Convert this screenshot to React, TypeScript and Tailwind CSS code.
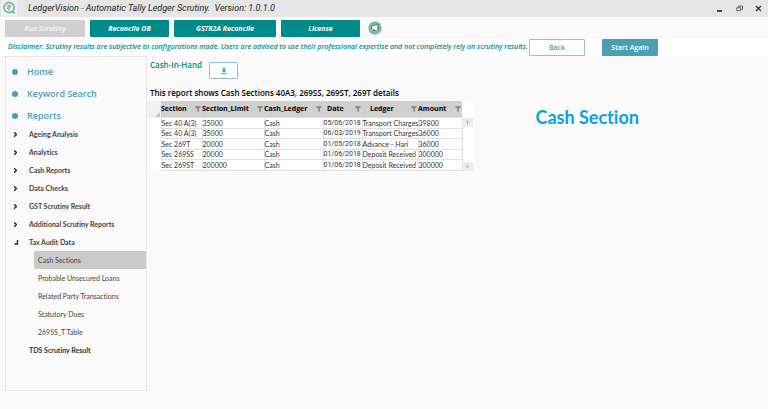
import { ChevronRight } from "lucide-react";

const reportGroups = [
  "Ageing Analysis",
  "Analytics",
  "Cash Reports",
  "Data Checks",
  "GST Scrutiny Result",
  "Additional Scrutiny Reports",
];

const taxAuditItems = [
  "Cash Sections",
  "Probable Unsecured Loans",
  "Related Party Transactions",
  "Statutory Dues",
  "269SS_T Table",
];

const columns = [
  { name: "Section", width: "w-[41px]", padding: "pl-0", cell: "" },
  { name: "Section_Limit", width: "w-[62px]", padding: "pl-0", cell: "" },
  { name: "Cash_Ledger", width: "w-[59px]", padding: "pl-0", cell: "" },
  { name: "Date", width: "w-[39px]", padding: "pl-1", cell: "font-[Roboto,sans-serif]" },
  { name: "Ledger", width: "w-[56px]", padding: "pl-2", cell: "" },
  { name: "Amount", width: "w-[44px]", padding: "pl-0", cell: "" },
];

const rows = [
  ["Sec 40 A(3)", "35000", "Cash", "05/06/2018", "Transport Charges", "39800"],
  ["Sec 40 A(3)", "35000", "Cash", "06/03/2019", "Transport Charges", "36000"],
  ["Sec 269T", "20000", "Cash", "01/05/2018", "Advance - Hari", "36000"],
  ["Sec 269SS", "20000", "Cash", "01/06/2018", "Deposit Received", "300000"],
  ["Sec 269ST", "200000", "Cash", "01/06/2018", "Deposit Received", "300000"],
];

function Logo() {
  return (
    <svg viewBox="0 0 16 17" className="h-[17px] w-4 shrink-0">
      <rect width="16" height="17" rx="2" fill="#f3f1ef" />
      <circle cx="8" cy="7.5" r="5" fill="#fff" stroke="#35b5c5" strokeWidth="1.4" />
      <path d="M11 11 13.5 13.5" stroke="#35b5c5" strokeWidth="1.6" />
      <path d="M6 5.1h4M6 6.8h4M6.2 5.1c3.4 0 3.4 3.2 0 3.2L9 10.5" fill="none" stroke="#ef9a52" strokeWidth="1.2" />
    </svg>
  );
}

function TitleBar() {
  return (
    <header className="flex h-[17px] items-center bg-[#e6e6e6] pl-px">
      <Logo />
      <h1 className="ml-[11px] flex-1 whitespace-pre font-[Roboto,sans-serif] text-[9px] leading-[17px] text-[#222] italic">
        LedgerVision - Automatic Tally Ledger Scrutiny.  Version: 1.0.1.0
      </h1>
      <div className="flex items-center gap-3 pr-[6px]">
        <button aria-label="Minimize" className="flex h-[7px] w-[7px] items-end">
          <span className="h-[2px] w-[5px] bg-[#444]" />
        </button>
        <button aria-label="Restore">
          <svg viewBox="0 0 7 7" className="h-[7px] w-[7px]" fill="none" stroke="#444">
            <path d="M2.5 2V1h4v3.5h-1M.8 2.7h4v3h-4z" strokeWidth=".8" />
          </svg>
        </button>
        <button aria-label="Close">
          <svg viewBox="0 0 7 7" className="h-[7px] w-[7px]" stroke="#333" strokeWidth="1.3">
            <path d="m1 1 5 5M6 1 1 6" />
          </svg>
        </button>
      </div>
    </header>
  );
}

function Toolbar() {
  const button = "h-[17px] rounded-[1px] bg-[#008b8b] text-[7px] leading-[17px] font-bold text-white italic";

  return (
    <nav className="flex h-[22px] items-center gap-[5px] px-[5px]">
      <button disabled className="h-[17px] w-[80px] rounded-[1px] bg-[#d0d0d0] text-[7px] leading-[17px] font-bold text-[#f3f3f3] italic">
        Run Scrutiny
      </button>
      <button className={`${button} w-[79px]`}>Reconcile OB</button>
      <button className={`${button} w-[102px]`}>GSTR2A Reconcile</button>
      <button className={`${button} w-[79px]`}>License</button>
      <button aria-label="Announcements" className="ml-[3px]">
        <svg viewBox="0 0 14 14" className="h-[14px] w-[14px]">
          <circle cx="7" cy="7" r="6.7" fill="#72bfa9" />
          <path d="M4 5 9.5 3.6v5.8L4 8.2z" fill="#f4f4f4" />
          <path d="M9.5 3.3h1v6.2h-1z" fill="#59666a" />
          <path d="M2.7 4.8h1.5v3.4H2.7z" fill="#d85a62" />
          <path d="M4 4.4 9.5 3v.8L4 5.2zM5 8.4h2l.3 1.7H5.5z" fill="#59666a" />
        </svg>
      </button>
    </nav>
  );
}

function Sidebar() {
  const group = "flex h-[18px] items-center gap-[10px] pl-[6px] font-[Lato,sans-serif] text-[7px] font-bold text-[#444]";
  const item = "block h-[18px] pl-1 leading-[18px]";

  return (
    <aside className="flex h-[335px] w-[142px] shrink-0 flex-col border border-[#e6e6e6] pt-[6px]">
      <div className="flex flex-col gap-1">
        {["Home", "Keyword Search", "Reports"].map((name) => (
          <a key={name} href="#" className="flex h-[18px] items-center gap-[9px] pl-[6px] text-[9px] font-semibold text-[#4a9fb5]">
            <span className="h-[6px] w-[6px] rounded-full bg-[#4a9fb5]" />
            {name}
          </a>
        ))}
      </div>
      {reportGroups.map((name) => (
        <button key={name} className={group}>
          <ChevronRight size={7} strokeWidth={5} color="#222" />
          {name}
        </button>
      ))}
      <button aria-expanded="true" className={group}>
        <svg viewBox="0 0 7 7" className="h-[7px] w-[7px]" fill="none" stroke="#222" strokeWidth="1.3">
          <path d="M5.5 1v4H2.5" />
        </svg>
        Tax Audit Data
      </button>
      <ul className="ml-[28px] font-[Lato,sans-serif] text-[7px] text-[#444]">
        {taxAuditItems.map((name) => (
          <li key={name}>
            <a href="#" className={name === "Cash Sections" ? `${item} bg-[#cacaca]` : item}>
              {name}
            </a>
          </li>
        ))}
      </ul>
      <button className="h-[18px] pl-[23px] text-left font-[Lato,sans-serif] text-[7px] leading-[16px] font-bold text-[#333]">
        TDS Scrutiny Result
      </button>
    </aside>
  );
}

function FilterIcon() {
  return (
    <svg viewBox="0 0 6 6" className="h-[6px] w-[6px] shrink-0" fill="#808080">
      <path d="M.3.3h5.4v1L3.7 2.6v3.1H2.3V2.6L.3 1.3z" />
    </svg>
  );
}

function SectionTable() {
  return (
    <div className="flex">
      <table className="w-[315px] table-fixed border-collapse text-[7px] text-[#333]">
        <thead>
          <tr className="h-[16px] bg-[#d0d0d0]">
            <th className="w-[14px] bg-[#f0f0f0] p-0 align-bottom">
              <svg viewBox="0 0 6 6" className="ml-auto h-[6px] w-[6px]">
                <path d="M5 0v5H0z" fill="#c4c4c4" />
              </svg>
            </th>
            {columns.map((column) => (
              <th key={column.name} className={`${column.width} p-0`}>
                <div className={`flex items-center justify-between pr-px leading-[16px] font-bold text-black ${column.padding}`}>
                  {column.name}
                  <FilterIcon />
                </div>
              </th>
            ))}
          </tr>
        </thead>
        <tbody className="font-[Lato,sans-serif]">
          {rows.map((row, i) => (
            <tr key={i} className="bg-white odd:h-[11px] even:h-[10px]">
              <td className="p-0" />
              {row.map((cell, j) => (
                <td key={j} className={`border border-[#e0e0e0] p-0 leading-[9px] whitespace-nowrap ${columns[j].cell}`}>
                  {cell}
                </td>
              ))}
            </tr>
          ))}
        </tbody>
      </table>
      <div className="flex w-[10px] flex-col justify-between bg-white pt-[17px]">
        <button aria-label="Scroll up" className="flex h-[9px] items-center justify-center bg-[#ededed]">
          <svg viewBox="0 0 5 5" className="h-[5px] w-[5px]" fill="none" stroke="#bbb">
            <path d="M2.5 5V1M.5 2.8l2-2 2 2" />
          </svg>
        </button>
        <button aria-label="Scroll down" className="flex h-[9px] items-center justify-center bg-[#ededed]">
          <svg viewBox="0 0 5 5" className="h-[5px] w-[5px]" fill="none" stroke="#bbb">
            <path d="M2.5 0v4M.5 2.2l2 2 2-2" />
          </svg>
        </button>
      </div>
    </div>
  );
}

export default function App() {
  return (
    <div className="min-h-screen bg-[#fafafa] font-['Open_Sans','Noto_Sans',sans-serif] [font-variant-ligatures:none]">
      <TitleBar />
      <Toolbar />
      <div className="flex h-[17px] items-center bg-white pl-2">
        <p className="w-[521px] text-[7px] font-semibold whitespace-nowrap text-[#008b8b] italic">
          Disclaimer: Scrutiny results are subjective to configurations made. Users are advised to use their professional expertise and not completely rely on scrutiny results.
        </p>
        <button className="h-[17px] w-[56px] rounded-[1px] border border-[#8cc5d2] bg-white text-[7px] leading-[15px] font-semibold text-[#4a9fb5]">
          Back
        </button>
        <button className="ml-[17px] h-[17px] w-[56px] rounded-[1px] bg-[#4a9fb5] text-[7px] leading-[17px] font-semibold text-white">
          Start Again
        </button>
      </div>
      <div className="flex pl-[5px]">
        <Sidebar />
        <main className="flex flex-1 items-start">
          <section>
            <div className="flex h-[28px] pl-[3px]">
              <h2 className="w-[59px] pt-[3px] text-[8px] leading-[12px] font-semibold whitespace-nowrap text-[#008b8b]">Cash-In-Hand</h2>
              <button aria-label="Download" className="mt-[6px] flex h-[17px] w-[29px] items-center justify-center rounded-[1px] border border-[#8cc5d2] bg-white">
                <svg viewBox="0 0 8 8" className="h-2 w-2" fill="#4a9fb5">
                  <path d="M3 .8h2v2.4h1.8L4 5.8 1.2 3.2H3zM1.2 6.2h5.6v1H1.2z" />
                </svg>
              </button>
            </div>
            <p className="pl-[3px] text-[8px] leading-[17px] font-semibold text-black">
              This report shows Cash Sections 40A3, 269SS, 269ST, 269T details
            </p>
            <SectionTable />
          </section>
          <h2 className="mt-[49px] ml-[63px] font-[Lato,sans-serif] text-[18px] leading-[24px] font-bold text-[#0d9fe5]">Cash Section</h2>
        </main>
      </div>
    </div>
  );
}
